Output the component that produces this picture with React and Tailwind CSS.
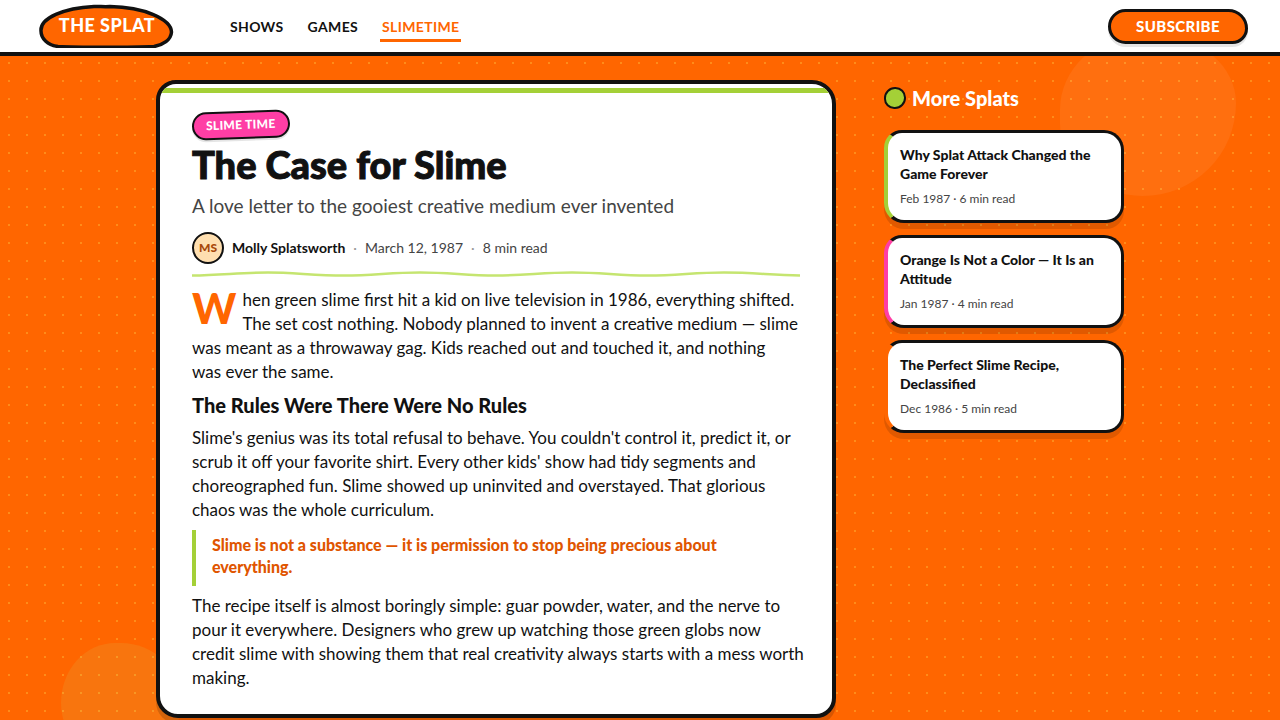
import React from "react";

const navLinks = [
  { label: "SHOWS", active: false },
  { label: "GAMES", active: false },
  { label: "SLIMETIME", active: true },
];

const related = [
  {
    title: "Why Splat Attack Changed the Game Forever",
    meta: "Feb 1987 · 6 min read",
    accent: "border-l-[#a4d037]",
  },
  {
    title: "Orange Is Not a Color — It Is an Attitude",
    meta: "Jan 1987 · 4 min read",
    accent: "border-l-[#ff3ea5]",
  },
  {
    title: "The Perfect Slime Recipe, Declassified",
    meta: "Dec 1986 · 5 min read",
    accent: "border-l-[#ff6600]",
  },
];

const Logo = () => (
  <a href="#home" aria-label="The Splat" className="block shrink-0 pb-1">
    <svg width="150" height="48" viewBox="0 0 150 48" aria-hidden="true">
      <path
        d="M9 31 C8 18 32 8 62 6.5 C67 6.2 72 7 78 6.5 C112 7 139 19 139.500 32 C139 40 131 45 122 46.500 C100 47.500 45 47.500 26 46.500 C16 45 9 39 9 31 Z"
        fill="#ff6600"
        stroke="#111111"
        strokeWidth="3.500"
      />
      <text
        x="75"
        y="32"
        textAnchor="middle"
        fill="#ffffff"
        className="font-['Lato',sans-serif] text-[18px] font-black tracking-wide"
      >
        THE SPLAT
      </text>
    </svg>
  </a>
);

const Header = () => (
  <header className="sticky top-0 z-10 flex h-14 items-center justify-between border-b-4 border-[#111111] bg-white px-8">
    <div className="flex items-center gap-[46px]">
      <Logo />
      <nav className="flex items-center gap-5">
        {navLinks.map((link) => (
          <a
            key={link.label}
            href={`#${link.label.toLowerCase()}`}
            className={`border-b-3 px-0.5 pt-[7px] pb-0.5 text-sm font-bold tracking-wide ${
              link.active ? "border-[#ff6600] text-[#ff6600]" : "border-transparent"
            }`}
          >
            {link.label}
          </a>
        ))}
      </nav>
    </div>
    <button
      type="button"
      className="h-[35px] w-[140px] rounded-[18px_20px_16px_18px] border-3 border-[#111111] bg-[#ff6600] text-[15px] font-black tracking-wide text-white shadow-[0_3px_0_rgba(0,0,0,0.1)]"
    >
      SUBSCRIBE
    </button>
  </header>
);

const Article = () => (
  <article className="overflow-hidden rounded-[20px_24px_20px_22px] border-4 border-[#111111] bg-white pt-1 shadow-[0_6px_0_rgba(0,0,0,0.15)]">
    <div className="h-[5px] bg-[#a4d037]" />
    <div className="px-8 pt-[18px] pb-6">
      <span className="inline-block -rotate-2 rounded-full border-2 border-[#111111] bg-[#ff3ea5] px-3 py-0.5 text-xs leading-5 font-black tracking-wide text-white shadow-[0_2px_0_rgba(0,0,0,0.1)]">
        SLIME TIME
      </span>
      <h1 className="mt-1 text-[38px] leading-[42px] font-black [-webkit-text-stroke:1px_#111111] [stroke-linejoin:round]">
        The Case for Slime
      </h1>
      <p className="mt-2 text-[19px] leading-[26px] text-[#444444]">
        A love letter to the gooiest creative medium ever invented
      </p>
      <div className="mt-[13px] flex items-center gap-2 text-sm text-[#444444]">
        <span className="flex h-8 w-8 items-center justify-center rounded-full border-2 border-[#111111] bg-[#ffdfb0] text-xs font-black text-[#a8480a]">
          MS
        </span>
        <span className="font-bold text-[#111111]">Molly Splatsworth</span>
        <span className="text-[#999999]">·</span>
        <span>March 12, 1987</span>
        <span className="text-[#999999]">·</span>
        <span>8 min read</span>
      </div>
      <svg
        className="mt-1.5 mb-2.5 block h-2 w-full"
        viewBox="0 0 608 8"
        preserveAspectRatio="none"
        aria-hidden="true"
      >
        <path
          d="M0 5.500 C30 5 50 2.500 76 2.500 S122 5.500 152 5.500 S198 2.500 228 2.500 S274 5.500 304 5.500 S350 2.500 380 2.500 S426 5.500 456 5.500 S502 2.500 532 2.500 S578 5 608 5.500"
          fill="none"
          stroke="#c5e570"
          strokeWidth="2.500"
        />
      </svg>
      <p className="-mr-2 text-[17px] leading-6 first-letter:float-left first-letter:mr-1.5 first-letter:text-[42px] first-letter:leading-10 first-letter:font-black first-letter:text-[#ff6600]">
        When green slime first hit a kid on live television in 1986, everything shifted.
        <br />
        The set cost nothing. Nobody planned to invent a creative medium — slime
        <br />
        was meant as a throwaway gag. Kids reached out and touched it, and nothing
        <br />
        was ever the same.
      </p>
      <h2 className="mt-2 mb-2 text-xl leading-[26px] font-black">
        The Rules Were There Were No Rules
      </h2>
      <p className="-mr-2 text-[17px] leading-6">
        Slime's genius was its total refusal to behave. You couldn't control it, predict it, or
        <br />
        scrub it off your favorite shirt. Every other kids' show had tidy segments and
        <br />
        choreographed fun. Slime showed up uninvited and overstayed. That glorious
        <br />
        chaos was the whole curriculum.
      </p>
      <blockquote className="my-2 border-l-4 border-[#a4d037] pt-1 pb-2 pl-4 text-base leading-[22px] font-black text-[#e05500]">
        Slime is not a substance — it is permission to stop being precious about
        <br />
        everything.
      </blockquote>
      <p className="-mr-2 text-[17px] leading-6">
        The recipe itself is almost boringly simple: guar powder, water, and the nerve to
        <br />
        pour it everywhere. Designers who grew up watching those green globs now
        <br />
        credit slime with showing them that real creativity always starts with a mess worth
        <br />
        making.
      </p>
    </div>
  </article>
);

const Sidebar = () => (
  <aside>
    <h2 className="mb-3.5 flex h-9 items-center gap-1.5 text-xl font-black text-white">
      <span className="h-[22px] w-[22px] rounded-[50%_48%_50%_46%] border-2 border-[#111111] bg-[#a4d037]" />
      More Splats
    </h2>
    <div className="flex flex-col gap-3">
      {related.map((item) => (
        <a
          key={item.title}
          href="#article"
          className={`block rounded-[18px_20px_18px_20px] border-3 border-l-4 border-[#111111] bg-white p-3 shadow-[0_6px_0_rgba(0,0,0,0.12)] ${item.accent}`}
        >
          <h3 className="text-sm leading-[19px] font-black">{item.title}</h3>
          <p className="mt-1.5 text-xs leading-[19px] text-[#444444]">{item.meta}</p>
        </a>
      ))}
    </div>
  </aside>
);

export default function App() {
  return (
    <div className="relative min-h-screen overflow-hidden bg-[#ff6600] bg-[radial-gradient(circle,#ff8c1a_1px,transparent_1px)] bg-[size:18px_18px] font-['Lato',sans-serif] text-[#111111]">
      {/* background blobs */}
      <div className="absolute top-9 right-11 h-40 w-44 rounded-[45%_45%_53%_47%/46%_42%_58%_45%] bg-white/6" />
      <div className="absolute top-[643px] left-[61px] h-30 w-30 rounded-[45%_50%_50%_50%/50%_50%_50%_50%] bg-[#c5e570]/12" />
      <Header />
      <main className="relative mx-auto grid max-w-[1032px] grid-cols-[minmax(0,1fr)_240px] gap-12 px-8 py-6">
        <Article />
        <Sidebar />
      </main>
    </div>
  );
}
